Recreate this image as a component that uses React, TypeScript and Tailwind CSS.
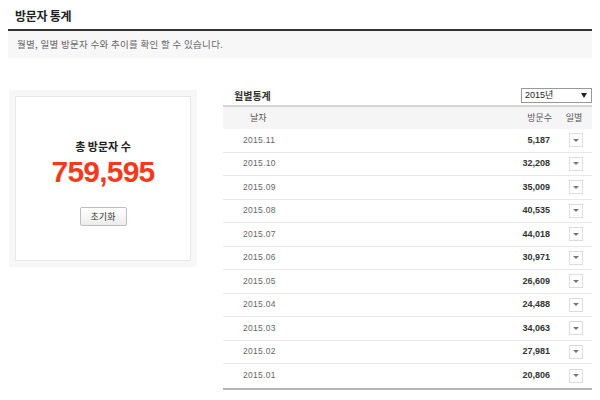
import React from 'react';

const rows = [
  { month: '2015.11', count: '5,187' },
  { month: '2015.10', count: '32,208' },
  { month: '2015.09', count: '35,009' },
  { month: '2015.08', count: '40,535' },
  { month: '2015.07', count: '44,018' },
  { month: '2015.06', count: '30,971' },
  { month: '2015.05', count: '26,609' },
  { month: '2015.04', count: '24,488' },
  { month: '2015.03', count: '34,063' },
  { month: '2015.02', count: '27,981' },
  { month: '2015.01', count: '20,806' },
];

function DayToggle() {
  return (
    <div className="w-[14px] h-[14px] border border-[#dcdcdc] bg-white flex items-center justify-center">
      <span className="block w-0 h-0 border-l-[3px] border-r-[3px] border-t-[3px] border-l-transparent border-r-transparent border-t-[#777]" />
    </div>
  );
}

export default function App() {
  return (
    <div className="w-[600px] h-[400px] bg-white overflow-hidden px-[8px] font-['Noto_Sans_CJK_KR',sans-serif] text-[#333]">
      {/* 타이틀 */}
      <div className="h-[29px] flex items-center pl-[7px] pt-[3px]">
        <h1 className="text-[12px] font-bold text-[#222] tracking-[-0.3px]">방문자 통계</h1>
      </div>
      <div className="h-[2px] bg-[#333]" />
      <div className="h-[27px] bg-[#f7f7f7] flex items-center pl-[9px]">
        <p className="text-[9.5px] text-[#666] tracking-[0.3px]">월별, 일별 방문자 수와 추이를 확인 할 수 있습니다.</p>
      </div>

      <div className="flex items-start mt-[30px]">
        {/* 총 방문자 */}
        <div className="mt-[2px] ml-[1px] w-[188px] h-[177px] bg-[#f7f7f7] p-[6px]">
          <div className="h-full bg-white border border-[#e8e8e8] flex flex-col items-center pt-[41px]">
            <p className="text-[11px] leading-[16px] font-bold text-[#222]">총 방문자 수</p>
            <p className="mt-[2px] text-[30px] leading-[32px] font-bold text-[#f03c1c] font-['Liberation_Sans',Arial,sans-serif] tracking-[-0.8px]">
              759,595
            </p>
            <button className="mt-[19px] w-[47px] h-[19px] border border-[#bdbdbd] rounded-[2px] bg-gradient-to-b from-white to-[#ececec] text-[9px] text-[#333] leading-none">
              초기화
            </button>
          </div>
        </div>

        {/* 월별통계 */}
        <div className="ml-[26px] flex-1">
          <div className="h-[15px] flex items-center justify-between">
            <h2 className="pl-[11px] text-[10px] font-bold text-[#333]">월별통계</h2>
            <div className="w-[71px] h-[15px] border border-[#999] bg-white flex items-center justify-between pl-[3px] pr-[4px]">
              <span className="text-[9px] text-[#222] font-['Liberation_Sans','Noto_Sans_CJK_KR',sans-serif]">2015년</span>
              <span className="block w-0 h-0 border-l-[3px] border-r-[3px] border-t-[5px] border-l-transparent border-r-transparent border-t-[#222]" />
            </div>
          </div>

          <div className="mt-[2px] border-t-2 border-[#d5d5d5]" />
          <div className="h-[22px] bg-[#f5f5f5] flex items-center text-[9px] text-[#555]">
            <div className="flex-1 pl-[27px]">날자</div>
            <div className="w-[80px] text-right pr-[4px]">방문수</div>
            <div className="w-[36px] text-center">일별</div>
          </div>

          <div className="border-b-2 border-[#b5b5b5]">
            {rows.map((r, i) => (
              <div
                key={r.month}
                className={
                  'h-[23.5px] flex items-center ' + (i < rows.length - 1 ? 'border-b border-[#e8e8e8]' : '')
                }
              >
                <div className="flex-1 pl-[20px] text-[8.5px] text-[#666] font-['Liberation_Sans',sans-serif] tracking-[0.3px]">
                  {r.month}
                </div>
                <div className="w-[80px] text-right pr-[6px] text-[9px] font-bold text-[#333] font-['Liberation_Sans',sans-serif]">
                  {r.count}
                </div>
                <div className="w-[36px] flex justify-center pl-[4px]">
                  <DayToggle />
                </div>
              </div>
            ))}
          </div>
        </div>
      </div>
    </div>
  );
}
